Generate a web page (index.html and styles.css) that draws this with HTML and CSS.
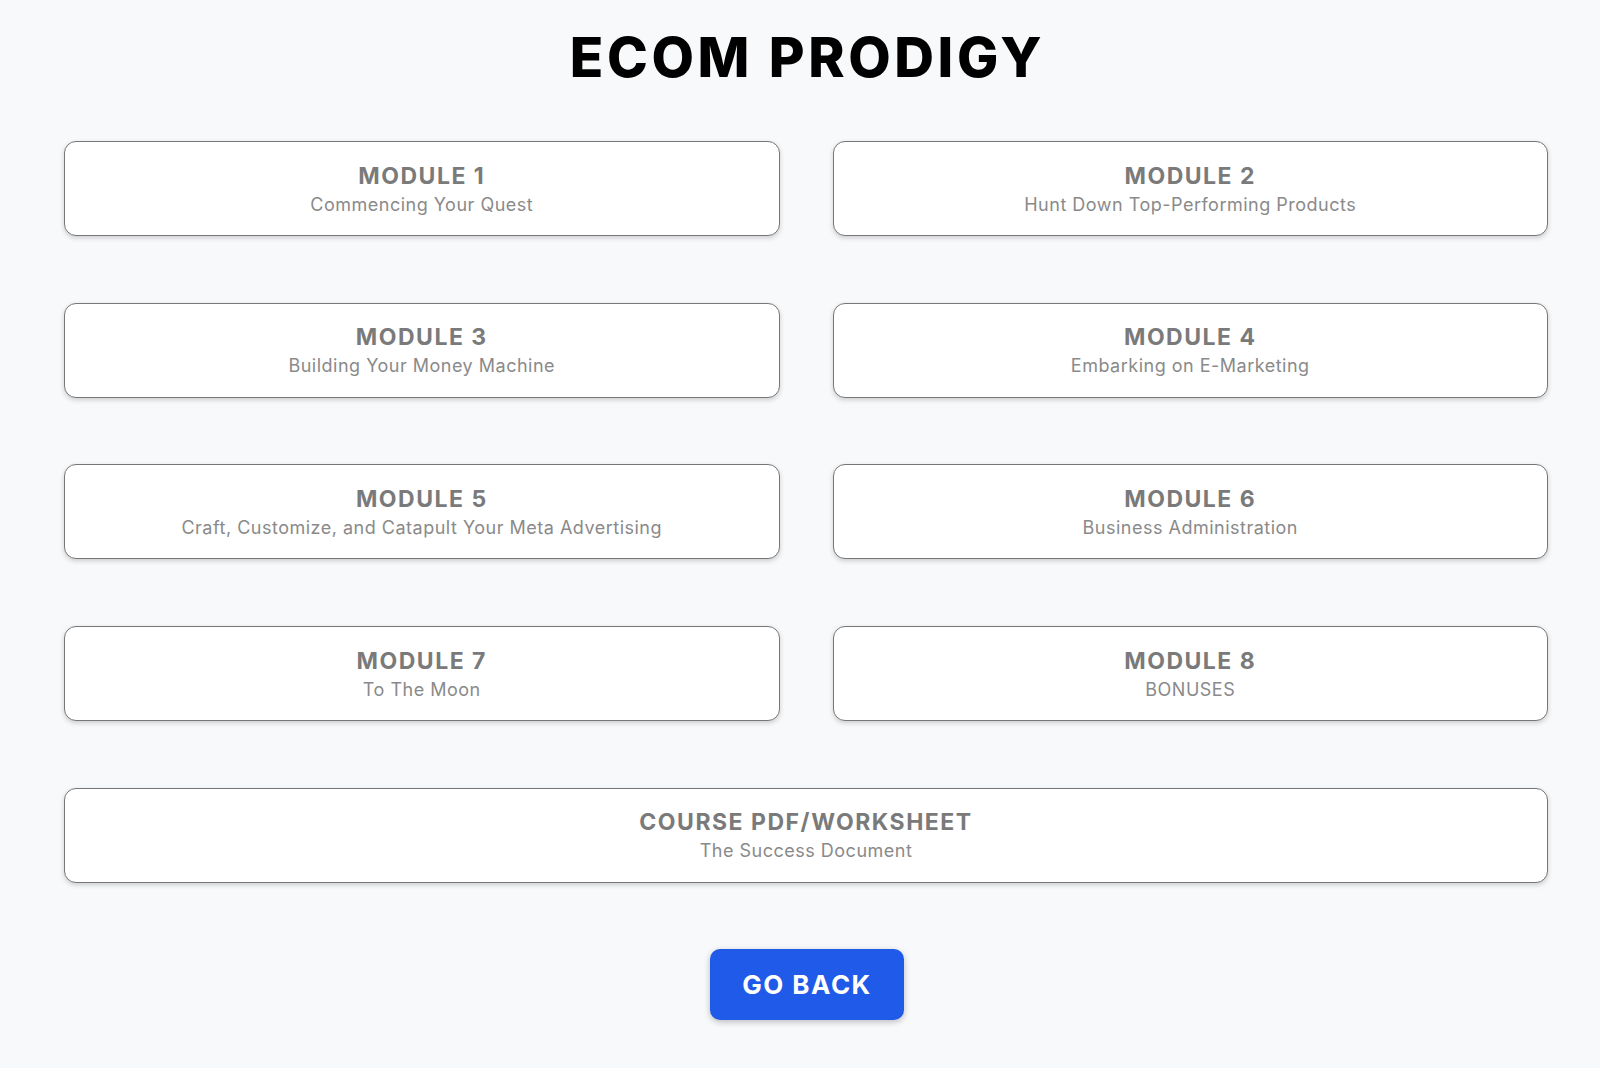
FILE: index.html
```html
<!DOCTYPE html>
<html lang="en">
<head>
<meta charset="utf-8">
<title>ECOM PRODIGY</title>
<link rel="stylesheet" href="styles.css">
</head>
<body>
<main class="page">
  <h1 class="title">ECOM PRODIGY</h1>
  <div class="grid">
    <a class="card" href="#"><span class="card-title">MODULE 1</span><span class="card-sub">Commencing Your Quest</span></a>
    <a class="card" href="#"><span class="card-title">MODULE 2</span><span class="card-sub">Hunt Down Top-Performing Products</span></a>
    <a class="card" href="#"><span class="card-title">MODULE 3</span><span class="card-sub">Building Your Money Machine</span></a>
    <a class="card" href="#"><span class="card-title">MODULE 4</span><span class="card-sub">Embarking on E-Marketing</span></a>
    <a class="card" href="#"><span class="card-title">MODULE 5</span><span class="card-sub">Craft, Customize, and Catapult Your Meta Advertising</span></a>
    <a class="card" href="#"><span class="card-title">MODULE 6</span><span class="card-sub">Business Administration</span></a>
    <a class="card" href="#"><span class="card-title">MODULE 7</span><span class="card-sub">To The Moon</span></a>
    <a class="card" href="#"><span class="card-title">MODULE 8</span><span class="card-sub">BONUSES</span></a>
    <a class="card card-wide" href="#"><span class="card-title">COURSE PDF/WORKSHEET</span><span class="card-sub">The Success Document</span></a>
  </div>
  <div class="actions">
    <a class="back" href="#">GO BACK</a>
  </div>
</main>
</body>
</html>
```
FILE: styles.css
```css
html, body {
  margin: 0;
  padding: 0;
  background: #f8f9fb;
}
.page {
  padding: 28px 52px 40px 64px;
  display: flex;
  flex-direction: column;
  align-items: stretch;
}
.title {
  margin: 0;
  text-align: center;
  font-family: "Inter", "DejaVu Sans", sans-serif;
  font-weight: 800;
  font-size: 55px;
  line-height: 58px;
  color: #000;
  letter-spacing: 3.6px;
  padding-left: 3px;
}
.grid {
  margin-top: 55px;
  display: grid;
  grid-template-columns: 1fr 1fr;
  column-gap: 53px;
  row-gap: 66.7px;
}
.card {
  height: 95px;
  box-sizing: border-box;
  padding-top: 4px;
  background: #fff;
  border: 1px solid #777;
  border-radius: 12px;
  box-shadow: 0 2px 5px rgba(0,0,0,0.18);
  display: flex;
  flex-direction: column;
  align-items: center;
  justify-content: center;
  text-decoration: none;
}
.card-wide {
  grid-column: 1 / span 2;
}
.card-title {
  font-family: "Inter", "DejaVu Sans", sans-serif;
  font-weight: 700;
  font-size: 23px;
  line-height: 28px;
  color: #7a7a7a;
  letter-spacing: 1.5px;
  margin-top: -3px;
}
.card-sub {
  font-family: "Inter", "Roboto", sans-serif;
  font-weight: 400;
  font-size: 18px;
  line-height: 24px;
  color: #8a8a8a;
  letter-spacing: 0.5px;
  margin-top: 3px;
}
.actions {
  margin-top: 66px;
  display: flex;
  justify-content: center;
  padding-left: 2px;
}
.back {
  width: 194px;
  height: 71px;
  box-sizing: border-box;
  display: flex;
  align-items: center;
  justify-content: center;
  background: #1f5ae8;
  color: #fff;
  border-radius: 10px;
  box-shadow: 0 2px 6px rgba(0,0,0,0.25);
  font-family: "Inter", "DejaVu Sans", sans-serif;
  font-weight: 700;
  font-size: 26px;
  letter-spacing: 1.5px;
  text-decoration: none;
}
```
